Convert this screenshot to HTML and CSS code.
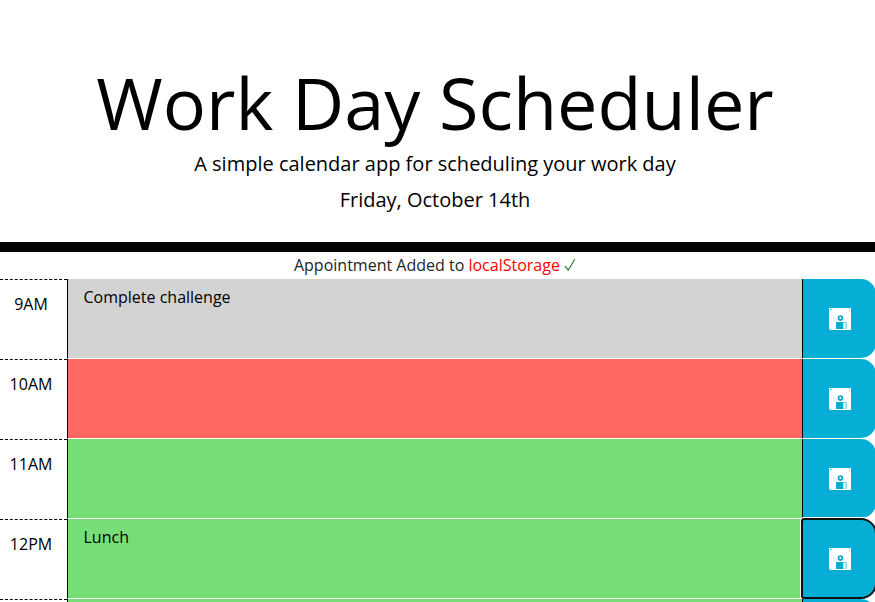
FILE: index.html
```html
<!DOCTYPE html>
<html lang="en">
<head>
<meta charset="UTF-8">
<title>Work Day Scheduler</title>
<link rel="stylesheet" href="styles.css">
</head>
<body>
<svg class="sprite" aria-hidden="true">
  <symbol id="save" viewBox="0 0 22 22">
    <path fill="#fff" d="M0 0h22v22H0z"/>
    <path fill="#06aed5" fill-opacity=".75" d="M1 1h2v1H1zM20 1h1v1h-1zM0 21h1v1H0z"/>
    <circle cx="11.4" cy="10.1" r="1.9" fill="none" stroke="#06aed5" stroke-width="1.8"/>
    <path fill="#06aed5" d="M7 14h7v7H7z"/>
    <path fill="#06aed5" fill-opacity=".5" d="M14 14h4v7h-4z"/>
    <path fill="#fff" d="M14.5 15h2v5.5h-2z"/>
  </symbol>
</svg>
<header class="jumbotron">
  <h1 class="title">Work Day Scheduler</h1>
  <p class="lead">A simple calendar app for scheduling your work day</p>
  <p class="lead date">Friday, October 14th</p>
</header>
<main>
  <p class="notice">Appointment Added to <span class="storage">localStorage</span> <svg class="check" viewBox="0 0 12 14"><path d="M1 8.2 4.2 12.2 10.8 1.2"/></svg></p>
  <div class="row">
    <div class="hour">9AM</div>
    <div class="entry past">Complete challenge</div>
    <button class="save"><svg class="icon"><use href="#save"/></svg></button>
  </div>
  <div class="row">
    <div class="hour">10AM</div>
    <div class="entry present"></div>
    <button class="save"><svg class="icon"><use href="#save"/></svg></button>
  </div>
  <div class="row">
    <div class="hour">11AM</div>
    <div class="entry future"></div>
    <button class="save"><svg class="icon"><use href="#save"/></svg></button>
  </div>
  <div class="row">
    <div class="hour">12PM</div>
    <div class="entry future">Lunch</div>
    <button class="save focused"><svg class="icon"><use href="#save"/></svg></button>
  </div>
  <div class="row">
    <div class="hour"></div>
    <div class="entry future"></div>
    <button class="save"></button>
  </div>
</main>
</body>
</html>
```
FILE: styles.css
```css
* { box-sizing: border-box; }
html { height: 100%; overflow: hidden; }
body {
  display: flex;
  flex-direction: column;
  height: 100%;
  margin: 0;
  overflow: hidden;
  background: #fff;
  color: #212529;
  font-family: "Open Sans", sans-serif;
  font-size: 16px;
  line-height: 24px;
}
.sprite { display: none; }
.jumbotron {
  flex: none;
  height: 252px;
  padding: 61px 5px 0 0;
  border-bottom: 10px solid #000;
  color: #000;
  text-align: center;
}
.title {
  margin: 0 0 6px;
  font-size: 72px;
  font-weight: 400;
  line-height: 82px;
}
.lead {
  margin: 0;
  font-size: 20px;
  line-height: 30px;
}
.lead.date { margin-top: 6px; }
main {
  flex: 1;
  min-height: 0;
  overflow: hidden;
}
.notice {
  height: 27px;
  margin: 0;
  padding: 1px 5px 0 0;
  text-align: center;
}
.storage { color: #f00; }
.check {
  width: 12px;
  height: 14px;
  vertical-align: -1px;
  fill: none;
  stroke: #2e7d32;
  stroke-width: 1.2;
}
.row {
  display: grid;
  grid-template-columns: 67px 735px 74px;
  width: 876px;
  height: 80px;
}
.hour {
  padding: 12px 5px 0 0;
  border-top: 1px dashed #000;
  color: #000;
  text-align: center;
}
.entry {
  padding: 6px 16px 6px 15.5px;
  border-left: 1px solid #000;
  border-bottom: 1px solid #fff;
  color: #000;
}
.past { background: #d3d3d3; }
.present { background: #ff6961; }
.future { background: #77dd77; }
.save {
  display: flex;
  align-items: center;
  justify-content: center;
  height: 79px;
  margin: 0;
  padding: 0;
  border: 0;
  border-left: 1px solid #000;
  border-radius: 0 15px 15px 0;
  background: #06aed5;
}
.focused {
  border-radius: 2px 15px 15px 2px;
  outline: 2px solid #101010;
  outline-offset: -1px;
  box-shadow: 0 0 0 2px #fff;
}
.icon { width: 22px; height: 22px; }
```
